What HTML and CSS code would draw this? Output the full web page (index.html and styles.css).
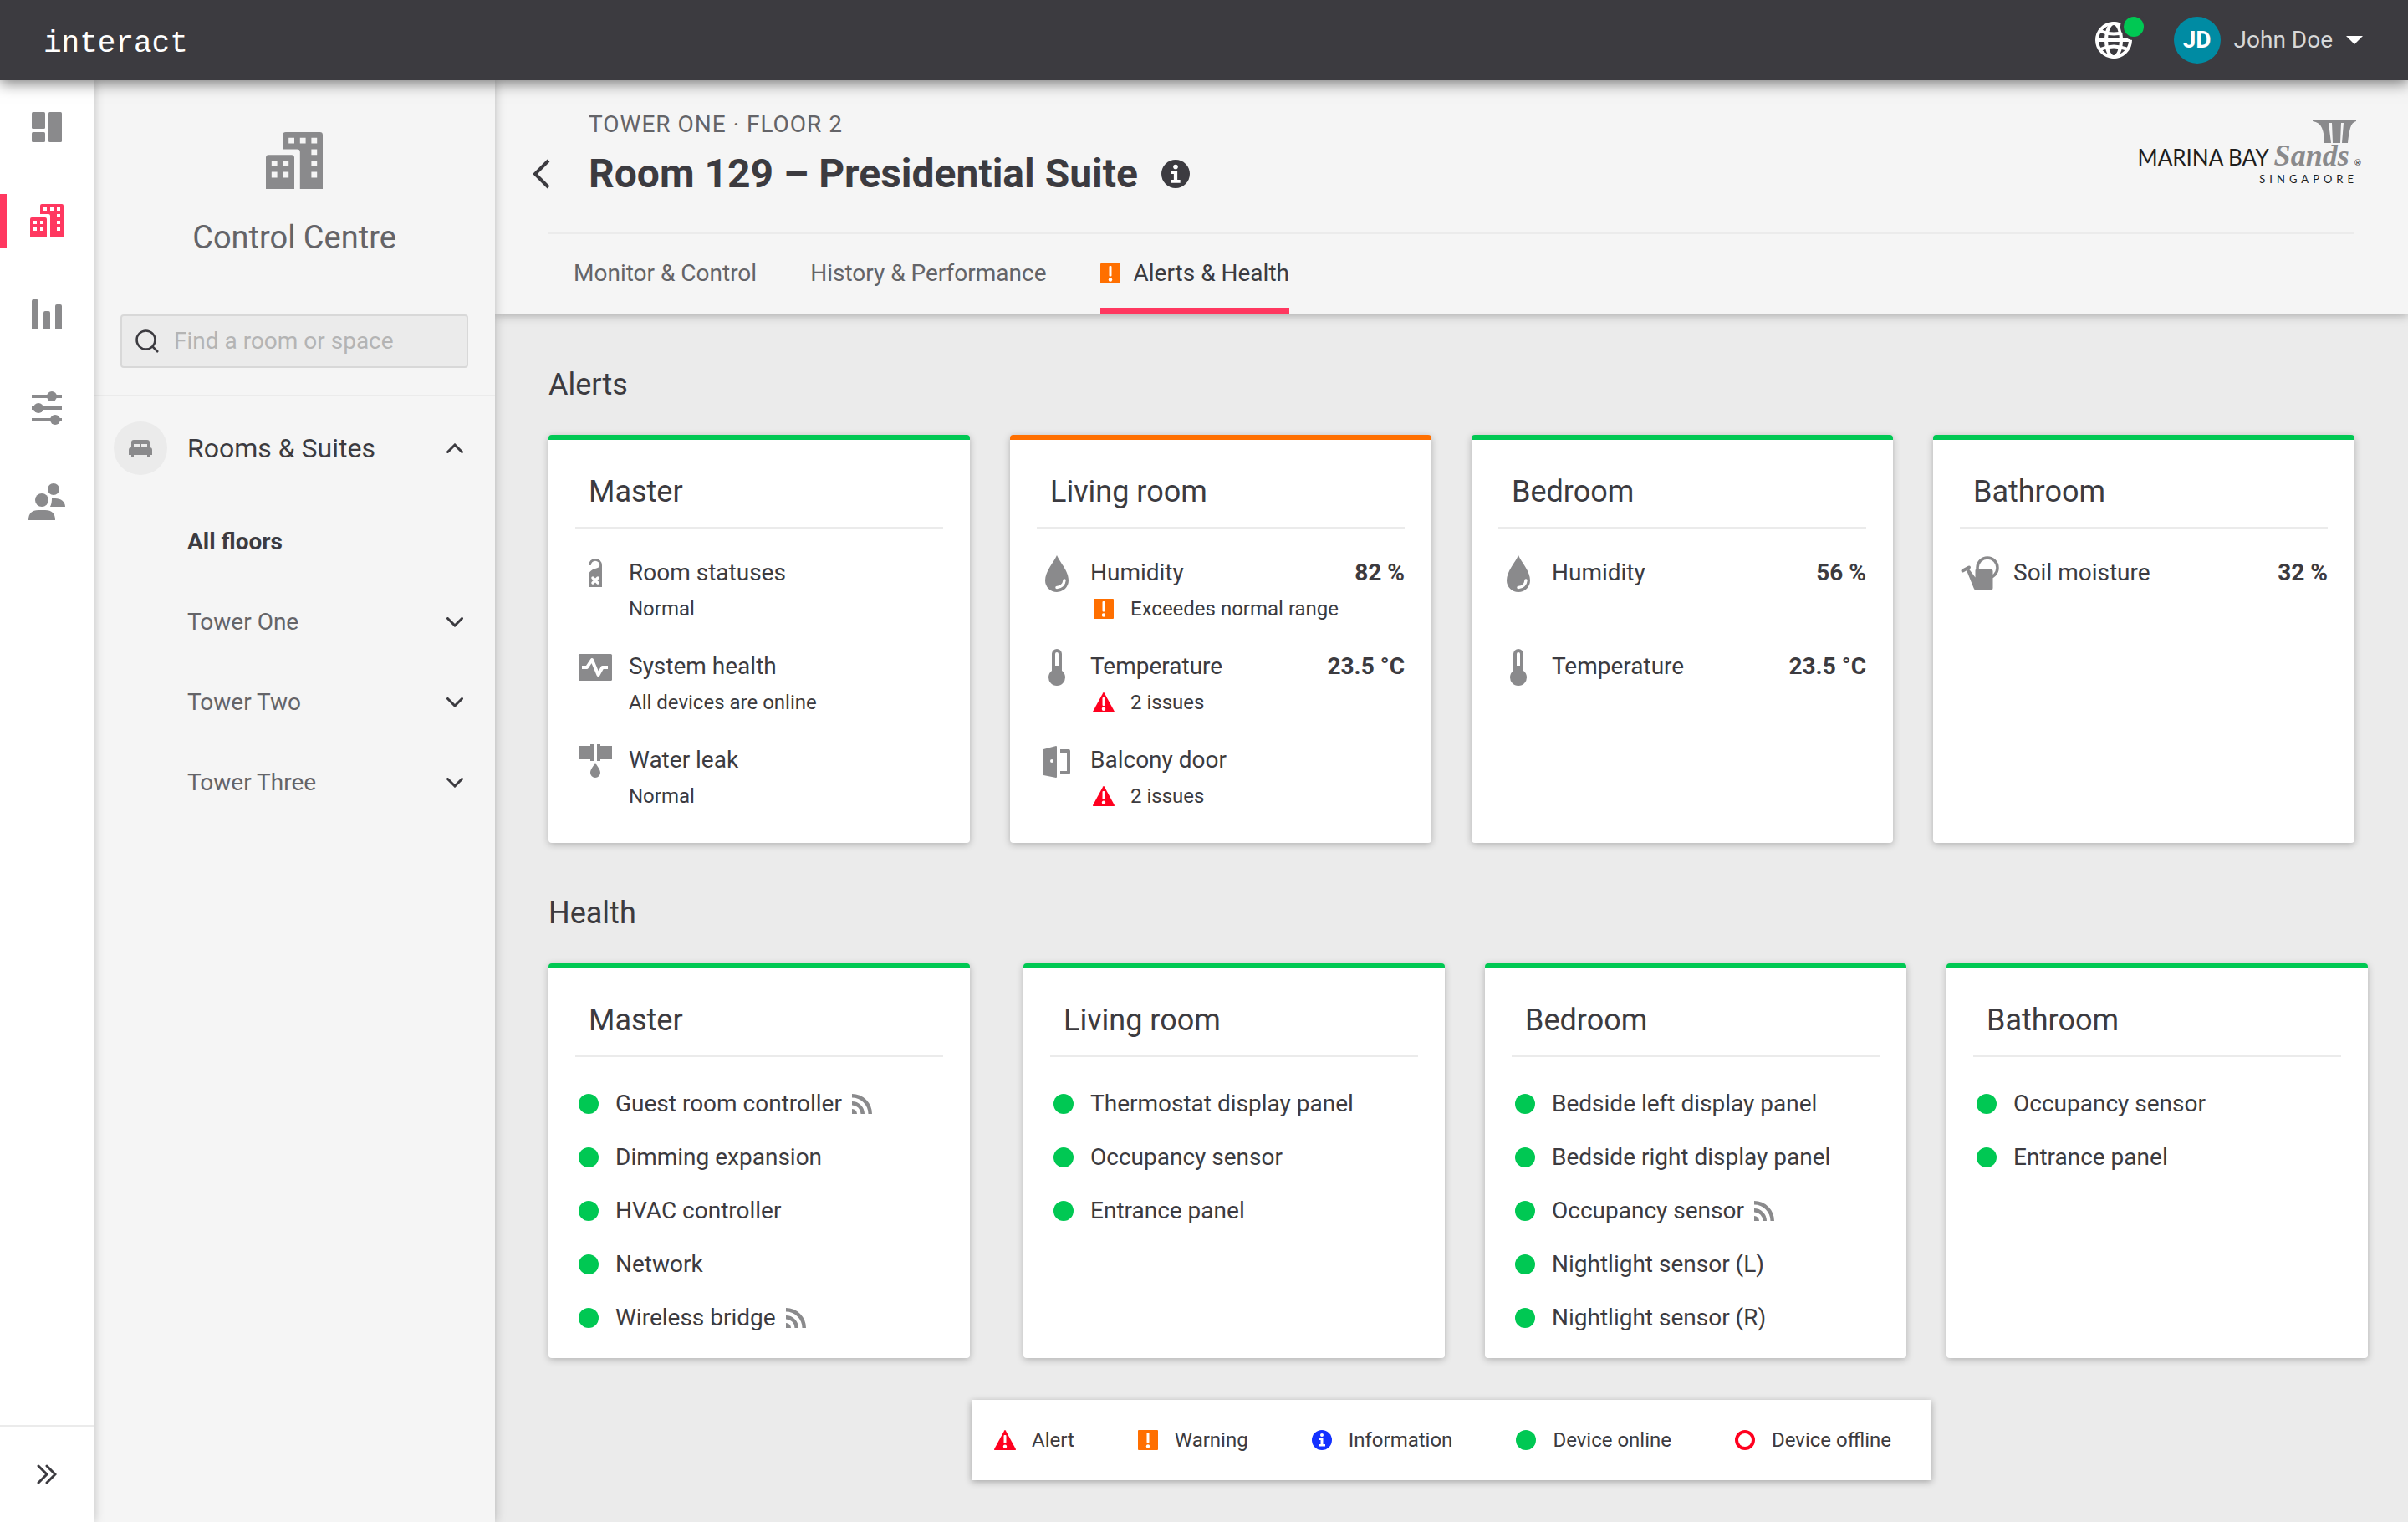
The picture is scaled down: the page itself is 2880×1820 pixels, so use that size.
FILE: index.html
```html
<!DOCTYPE html>
<html lang="en">
<head>
  <meta charset="UTF-8">
  <meta name="viewport" content="width=device-width, initial-scale=1.0">
  <title>Interact - Room 129</title>
  <link rel="stylesheet" href="styles.css">
</head>

<body>

  <!-- Icon set -->
  <svg class="icon-set" aria-hidden="true">
    <symbol id="dashboard" viewBox="0 0 48 48">
      <rect x="6" y="6" width="16" height="20" rx="1.5" />
      <rect x="6" y="30" width="16" height="12" rx="1.5" />
      <rect x="26" y="6" width="16" height="36" rx="1.5" />
    </symbol>
    <symbol id="building" viewBox="0 0 40 40">
      <path fill-rule="evenodd" d="M14 0h24a2 2 0 0 1 2 2v38H24V14a2 2 0 0 0-2-2H12V2a2 2 0 0 1 2-2zM16 4v4h4V4zM24 4v4h4V4zM32 4v4h4V4zM32 12v4h4v-4zM32 20v4h4v-4zM32 28v4h4v-4zM2 16h16a2 2 0 0 1 2 2v22H0V18a2 2 0 0 1 2-2zM4 20v4h4v-4zM12 20v4h4v-4zM4 28v4h4v-4zM12 28v4h4v-4z" />
    </symbol>
    <symbol id="bars" viewBox="0 0 48 48">
      <path d="M6 42V8a2 2 0 0 1 2-2h4a2 2 0 0 1 2 2v34zM20 42V22a2 2 0 0 1 2-2h4a2 2 0 0 1 2 2v20zM34 42V14a2 2 0 0 1 2-2h4a2 2 0 0 1 2 2v28z" />
    </symbol>
    <symbol id="sliders" viewBox="0 0 48 48">
      <path d="M6 8h36v4H6zM6 22h36v4H6zM6 36h36v4H6z" />
      <circle cx="30" cy="10" r="6" />
      <circle cx="14" cy="24" r="6" />
      <circle cx="34" cy="38" r="6" />
    </symbol>
    <symbol id="users" viewBox="0 0 48 48">
      <circle cx="18" cy="22" r="8" />
      <circle cx="32" cy="9" r="7" />
      <path d="M2 46c0-8 4-12 12-12h8c8 0 12 4 12 12zM30 20h4c7 0 12 4 12 10H28c1.500-3 2-6 2-10z" />
    </symbol>
    <symbol id="bed" viewBox="0 0 28 20">
      <path d="M3 8V3q0-3 3-3h16q3 0 3 3v5h-3V5h-7v3h-2V5H6v3zM0 18v-6q0-3 3-3h22q3 0 3 3v6h-3v2h-3v-2H6v2H3v-2z" />
    </symbol>
    <symbol id="chevron" viewBox="0 0 20 12">
      <path d="M1.500 1.500L10 10l8.500-8.500" fill="none" stroke="currentColor" stroke-width="3" stroke-linecap="round" />
    </symbol>
    <symbol id="warning" viewBox="0 0 32 32">
      <rect x="4" y="4" width="24" height="24" rx="1" fill="#ff6f00" />
      <rect x="14.500" y="7" width="3" height="12.500" rx="1" fill="#fff" />
      <circle cx="16" cy="23.500" r="2.200" fill="#fff" />
    </symbol>
    <symbol id="alert" viewBox="0 0 32 32">
      <path d="M15.300 4.500q.7-1 1.400 0L29 27q.3 1-.8 1H3.800q-1.100 0-.8-1z" fill="#ff001f" />
      <rect x="14.500" y="10" width="3" height="10" rx="1" fill="#fff" />
      <circle cx="16" cy="23.800" r="2.200" fill="#fff" />
    </symbol>
    <symbol id="info" viewBox="0 0 24 24">
      <circle cx="12" cy="12" r="12" />
      <path d="M8 9.500h5.500V17H16v2.500H8V17h2.500v-5H8z" fill="#fff" />
      <circle cx="12" cy="6" r="2" fill="#fff" />
    </symbol>
    <symbol id="rss" viewBox="0 0 24 24">
      <path d="M0 18a6 6 0 0 1 6 6H0zM0 9a15 15 0 0 1 15 15h-4.500A10.500 10.500 0 0 0 0 13.500zM0 0a24 24 0 0 1 24 24h-4.500A19.500 19.500 0 0 0 0 4.500z" />
    </symbol>
    <symbol id="hanger" viewBox="0 0 48 44">
      <path d="M16 12a8 8 0 0 1 16 0v26H16V25c0-5 3-7.500 8-9 3.500-1 5.200-1.800 5.200-4a5.200 5.200 0 0 0-10.400 0z" />
      <path d="M21 27l6 6M27 27l-6 6" stroke="#fff" stroke-width="3.500" stroke-linecap="round" />
    </symbol>
    <symbol id="pulse" viewBox="0 0 48 44">
      <rect x="4" y="6" width="40" height="32" rx="1.500" />
      <path d="M8 22h6l6-9 7.500 18 5-9H39" fill="none" stroke="#fff" stroke-width="4" stroke-linejoin="round" />
    </symbol>
    <symbol id="leak" viewBox="0 0 48 44">
      <path d="M4 4h14V2h4v20h-4v-2H4zM44 4H30V2h-4v20h4v-2h14zM24 24c2 4 6 8 6 12a6 6 0 0 1-12 0c0-4 4-8 6-12z" />
    </symbol>
    <symbol id="drop" viewBox="0 0 48 44">
      <path d="M24 0c4 9 14 19 14 30a14 14 0 0 1-28 0C10 19 20 9 24 0z" />
      <path d="M33 30a9 9 0 0 1-9 8.500" fill="none" stroke="#fff" stroke-width="3.500" stroke-linecap="round" />
    </symbol>
    <symbol id="thermometer" viewBox="0 0 48 44">
      <path fill-rule="evenodd" d="M18 6a6 6 0 0 1 12 0v20a10 10 0 1 1-12 0zM22 6v14h4V6a2 2 0 0 0-4 0z" />
    </symbol>
    <symbol id="door" viewBox="0 0 48 44">
      <path fill-rule="evenodd" d="M8 8l15-4q1 0 1 1v36q0 1-1 1L8 39zM18 20a2 2 0 1 0 0 4 2 2 0 0 0 0-4z" />
      <path d="M28 10h10v26H28" fill="none" stroke="currentColor" stroke-width="4" stroke-linejoin="round" />
    </symbol>
    <symbol id="can" viewBox="0 0 48 44">
      <circle cx="33" cy="15" r="12" fill="none" stroke="currentColor" stroke-width="3.500" />
      <path d="M21 16h15q3.500 0 3.500 3.500V39q0 3-3 3H20q-2.500 0-3.500-3L8 18l3-1.500 7.500 10V18.500q0-2.500 2.500-2.500z" />
      <path d="M3.500 18.500l7.500-4" stroke="currentColor" stroke-width="4" stroke-linecap="round" />
    </symbol>
  </svg>

  <header class="topbar">
    <a href="#" class="brand">interact</a>
    <button type="button" class="language" aria-label="Language">
      <svg viewBox="0 0 44 44" fill="none" stroke="#fff" stroke-width="4">
        <circle cx="22" cy="22" r="20" />
        <ellipse cx="22" cy="22" rx="9" ry="20" />
        <path d="M2 22h40M6 11q16 7 32 0M6 33q16-7 32 0" />
      </svg>
      <span class="language-dot"></span>
    </button>
    <button type="button" class="user">
      <span class="avatar">JD</span>
      John Doe
      <svg width="20" height="10" viewBox="0 0 20 10"><path d="M0 0h20L10 10z" fill="#fff" /></svg>
    </button>
  </header>

  <div class="layout">
    <nav class="rail">
      <a href="#" class="rail-link" aria-label="Dashboard"><svg><use href="#dashboard" /></svg></a>
      <a href="#" class="rail-link active" aria-label="Control Centre"><svg class="rail-building"><use href="#building" /></svg></a>
      <a href="#" class="rail-link" aria-label="Reports"><svg><use href="#bars" /></svg></a>
      <a href="#" class="rail-link" aria-label="Settings"><svg><use href="#sliders" /></svg></a>
      <a href="#" class="rail-link" aria-label="Users"><svg><use href="#users" /></svg></a>
      <button type="button" class="rail-expand" aria-label="Expand menu">
        <svg width="24" height="24" viewBox="0 0 24 24" fill="none" stroke="currentColor" stroke-width="3" stroke-linecap="round">
          <path d="M2 2l10 10L2 22M12 2l10 10-10 10" />
        </svg>
      </button>
    </nav>

    <aside class="sidebar">
      <div class="sidebar-head">
        <svg class="sidebar-logo"><use href="#building" /></svg>
        <h2>Control Centre</h2>
        <label class="search">
          <svg width="28" height="28" viewBox="0 0 28 28" fill="none" stroke="currentColor" stroke-width="2.500">
            <circle cx="12.500" cy="12.500" r="11" />
            <path d="M20 20l7 7" />
          </svg>
          <input type="text" placeholder="Find a room or space" aria-label="Find a room or space">
        </label>
      </div>
      <button type="button" class="group">
        <span class="group-icon"><svg width="28" height="20"><use href="#bed" /></svg></span>
        <span class="grow">Rooms &amp; Suites</span>
        <svg class="chevron up"><use href="#chevron" /></svg>
      </button>
      <ul class="floors">
        <li><a href="#" class="current">All floors</a></li>
        <li><button type="button">Tower One <svg class="chevron"><use href="#chevron" /></svg></button></li>
        <li><button type="button">Tower Two <svg class="chevron"><use href="#chevron" /></svg></button></li>
        <li><button type="button">Tower Three <svg class="chevron"><use href="#chevron" /></svg></button></li>
      </ul>
    </aside>

    <main>
      <div class="page-header">
        <div class="page-title">
          <a href="#" class="back" aria-label="Back">
            <svg width="24" height="36" viewBox="0 0 24 36" fill="none" stroke="currentColor" stroke-width="4">
              <path d="M20 2L4 18l16 16" />
            </svg>
          </a>
          <div class="grow">
            <p class="breadcrumb">TOWER ONE · FLOOR 2</p>
            <h1>Room 129 – Presidential Suite <svg width="34" height="34"><use href="#info" /></svg></h1>
          </div>
          <div class="hotel">
            <svg class="hotel-towers" width="52" height="28" viewBox="0 0 52 28">
              <path d="M0 0h52v1q-5 1-7 8t-3 18h-7l2-24h-3l-1 24h-9L23 3h-4l3 24h-8q0-11-3-18T0 1z" />
            </svg>
            <p class="hotel-name">MARINA BAY <em>Sands</em><small>®</small></p>
            <p class="hotel-city">SINGAPORE</p>
          </div>
        </div>
        <nav class="tabs">
          <a href="#">Monitor &amp; Control</a>
          <a href="#">History &amp; Performance</a>
          <a href="#" class="active"><svg viewBox="4 4 24 24"><use href="#warning" width="32" height="32" /></svg>Alerts &amp; Health</a>
        </nav>
      </div>

      <div class="content">
        <section>
          <h2>Alerts</h2>
          <div class="cards">
            <article class="card">
              <h3>Master</h3>
              <ul class="readings">
                <li>
                  <svg class="reading-icon"><use href="#hanger" /></svg>
                  <div class="grow">
                    <p>Room statuses</p>
                    <p class="status">Normal</p>
                  </div>
                </li>
                <li>
                  <svg class="reading-icon"><use href="#pulse" /></svg>
                  <div class="grow">
                    <p>System health</p>
                    <p class="status">All devices are online</p>
                  </div>
                </li>
                <li>
                  <svg class="reading-icon"><use href="#leak" /></svg>
                  <div class="grow">
                    <p>Water leak</p>
                    <p class="status">Normal</p>
                  </div>
                </li>
              </ul>
            </article>

            <article class="card card-warning">
              <h3>Living room</h3>
              <ul class="readings">
                <li>
                  <svg class="reading-icon"><use href="#drop" /></svg>
                  <div class="grow">
                    <p>Humidity <strong>82 %</strong></p>
                    <p class="status"><svg class="badge"><use href="#warning" /></svg>Exceedes normal range</p>
                  </div>
                </li>
                <li>
                  <svg class="reading-icon"><use href="#thermometer" /></svg>
                  <div class="grow">
                    <p>Temperature <strong>23.5 °C</strong></p>
                    <p class="status"><svg class="badge"><use href="#alert" /></svg>2 issues</p>
                  </div>
                </li>
                <li>
                  <svg class="reading-icon"><use href="#door" /></svg>
                  <div class="grow">
                    <p>Balcony door</p>
                    <p class="status"><svg class="badge"><use href="#alert" /></svg>2 issues</p>
                  </div>
                </li>
              </ul>
            </article>

            <article class="card">
              <h3>Bedroom</h3>
              <ul class="readings">
                <li>
                  <svg class="reading-icon"><use href="#drop" /></svg>
                  <p class="grow">Humidity <strong>56 %</strong></p>
                </li>
                <li>
                  <svg class="reading-icon"><use href="#thermometer" /></svg>
                  <p class="grow">Temperature <strong>23.5 °C</strong></p>
                </li>
              </ul>
            </article>

            <article class="card">
              <h3>Bathroom</h3>
              <ul class="readings">
                <li>
                  <svg class="reading-icon"><use href="#can" /></svg>
                  <p class="grow">Soil moisture <strong>32 %</strong></p>
                </li>
              </ul>
            </article>
          </div>
        </section>

        <section>
          <h2>Health</h2>
          <div class="cards cards-health">
            <article class="card">
              <h3>Master</h3>
              <ul class="devices">
                <li>Guest room controller <svg><use href="#rss" /></svg></li>
                <li>Dimming expansion</li>
                <li>HVAC controller</li>
                <li>Network</li>
                <li>Wireless bridge <svg><use href="#rss" /></svg></li>
              </ul>
            </article>

            <article class="card">
              <h3>Living room</h3>
              <ul class="devices">
                <li>Thermostat display panel</li>
                <li>Occupancy sensor</li>
                <li>Entrance panel</li>
              </ul>
            </article>

            <article class="card">
              <h3>Bedroom</h3>
              <ul class="devices">
                <li>Bedside left display panel</li>
                <li>Bedside right display panel</li>
                <li>Occupancy sensor <svg><use href="#rss" /></svg></li>
                <li>Nightlight sensor (L)</li>
                <li>Nightlight sensor (R)</li>
              </ul>
            </article>

            <article class="card">
              <h3>Bathroom</h3>
              <ul class="devices">
                <li>Occupancy sensor</li>
                <li>Entrance panel</li>
              </ul>
            </article>
          </div>
        </section>

        <ul class="legend">
          <li><svg class="badge"><use href="#alert" /></svg>Alert</li>
          <li><svg class="badge"><use href="#warning" /></svg>Warning</li>
          <li><svg class="badge badge-info" viewBox="-4 -4 32 32"><use href="#info" width="24" height="24" /></svg>Information</li>
          <li><svg class="badge" viewBox="0 0 32 32"><circle cx="16" cy="16" r="12" fill="#00c853" /></svg>Device online</li>
          <li><svg class="badge" viewBox="0 0 32 32"><circle cx="16" cy="16" r="10" fill="none" stroke="#ff001f" stroke-width="4" /></svg>Device offline</li>
        </ul>
      </div>
    </main>
  </div>

</body>
</html>
```
FILE: styles.css
```css
* {
  box-sizing: border-box;
}

body {
  margin: 0;
  min-height: 100vh;
  display: flex;
  flex-direction: column;
  font-family: Roboto, sans-serif;
  font-size: 28px;
  line-height: 42px;
  color: #3c3b40;
  background-color: #ebebeb;
}

h1, h2, h3, p, ul {
  margin: 0;
  padding: 0;
}

h2, h3 {
  font-size: 36px;
  line-height: 44px;
  font-weight: 400;
}

ul {
  list-style: none;
}

a {
  color: inherit;
  text-decoration: none;
}

button {
  padding: 0;
  border: none;
  background: none;
  font: inherit;
  color: inherit;
  text-align: left;
  cursor: pointer;
}

svg {
  flex: none;
  fill: currentColor;
}

.icon-set {
  display: none;
}

.grow {
  flex: 1;
}

/* Top bar */
.topbar {
  position: relative;
  z-index: 3;
  display: flex;
  align-items: center;
  height: 96px;
  padding: 0 54px 0 52px;
  background-color: #3c3b40;
  box-shadow: 0 4px 16px rgba(0, 0, 0, 0.5);
}

.brand {
  flex: 1;
  padding-top: 10px;
  font-family: "Liberation Mono", monospace;
  font-size: 36px;
  color: #fff;
}

.language {
  position: relative;
  width: 44px;
  height: 44px;
  margin-right: 50px;
}

.language svg {
  display: block;
  fill: none;
}

.language-dot {
  position: absolute;
  top: -10px;
  right: -18px;
  width: 32px;
  height: 32px;
  border: 4px solid #3c3b40;
  border-radius: 50%;
  background-color: #00c853;
}

.user {
  display: flex;
  align-items: center;
  gap: 16px;
  color: #d8d8d8;
}

.avatar {
  width: 56px;
  line-height: 56px;
  border-radius: 50%;
  background-color: #008ba3;
  color: #fff;
  font-weight: 700;
  text-align: center;
}

.layout {
  flex: 1;
  display: flex;
}

/* Icon rail */
.rail {
  position: relative;
  z-index: 2;
  flex: none;
  display: flex;
  flex-direction: column;
  gap: 48px;
  width: 112px;
  padding-top: 24px;
  background-color: #fff;
  box-shadow: 0 0 12px rgba(0, 0, 0, 0.25);
}

.rail-link {
  display: flex;
  align-items: center;
  justify-content: center;
  height: 64px;
  border: solid transparent;
  border-width: 0 8px;
  color: #8a8a8c;
}

.rail-link svg {
  width: 48px;
  height: 48px;
}

.rail-link .rail-building {
  width: 40px;
  height: 40px;
}

.rail-link.active {
  border-left-color: #ff3860;
  color: #ff3860;
}

.rail-expand {
  display: flex;
  align-items: center;
  justify-content: center;
  height: 116px;
  margin-top: auto;
  border-top: 2px solid #ebebeb;
}

.rail-expand svg {
  fill: none;
}

/* Sidebar */
.sidebar {
  position: relative;
  z-index: 1;
  flex: none;
  width: 480px;
  background-color: #f5f5f5;
  box-shadow: 0 0 12px rgba(0, 0, 0, 0.25);
}

.sidebar-head {
  display: flex;
  flex-direction: column;
  align-items: center;
  padding: 62px 32px 32px;
  border-bottom: 2px solid #ebebeb;
}

.sidebar-logo {
  width: 68px;
  height: 68px;
  color: #8a8a8c;
}

.sidebar h2 {
  margin: 36px 0 70px;
  font-size: 38px;
  color: #646468;
}

.search {
  display: flex;
  align-items: center;
  gap: 18px;
  width: 100%;
  height: 64px;
  padding: 0 16px;
  border: 2px solid #d8d8d8;
  border-radius: 4px;
  background-color: #ebebeb;
}

.search svg {
  fill: none;
}

.search input {
  flex: 1;
  min-width: 0;
  padding: 0;
  border: none;
  outline: none;
  background: none;
  font: inherit;
  color: inherit;
}

.search input::placeholder {
  color: #b4b4b4;
}

.group {
  display: flex;
  align-items: center;
  gap: 24px;
  width: 100%;
  margin: 30px 0 32px;
  padding: 0 38px 0 24px;
  font-size: 32px;
}

.group-icon {
  display: flex;
  align-items: center;
  justify-content: center;
  width: 64px;
  height: 64px;
  border-radius: 50%;
  background-color: #ebebeb;
  color: #8a8a8c;
}

.chevron {
  width: 20px;
  height: 12px;
  color: #3c3b40;
}

.chevron.up {
  transform: rotate(180deg);
}

.floors a,
.floors button {
  display: flex;
  align-items: center;
  justify-content: space-between;
  width: 100%;
  height: 96px;
  padding: 0 38px 0 112px;
  color: #646468;
}

.floors .current {
  font-weight: 700;
  color: #3c3b40;
}

/* Page header */
main {
  flex: 1;
  min-width: 0;
}

.page-header {
  padding: 34px 64px 0;
  background-color: #f5f5f5;
  box-shadow: 0 0 12px rgba(0, 0, 0, 0.35);
}

.page-title {
  display: flex;
  gap: 44px;
  margin: 0 -8px 38px -20px;
}

.back {
  display: flex;
  align-items: center;
  align-self: flex-end;
  height: 64px;
}

.back svg {
  fill: none;
}

.breadcrumb {
  margin-bottom: 8px;
  line-height: 38px;
  letter-spacing: 1px;
  color: #646468;
}

h1 {
  display: flex;
  align-items: center;
  gap: 28px;
  font-size: 48px;
  line-height: 64px;
}

.hotel {
  display: flex;
  flex-direction: column;
  align-items: flex-end;
  padding-top: 14px;
  font-family: Lato, sans-serif;
  color: #1e1e1e;
}

.hotel-towers {
  margin-right: 6px;
  color: #8a8a8c;
}

.hotel-name {
  display: flex;
  align-items: baseline;
  gap: 6px;
  font-size: 26px;
  line-height: 28px;
}

.hotel-name em {
  font-family: "Liberation Serif", serif;
  font-size: 36px;
  font-weight: 700;
  color: #8a8a8c;
}

.hotel-name small {
  font-size: 10px;
}

.hotel-city {
  margin-right: 4px;
  font-size: 13px;
  line-height: 12px;
  letter-spacing: 5px;
}

.tabs {
  display: flex;
  gap: 64px;
  padding-left: 30px;
  border-top: 2px solid #ebebeb;
  color: #646468;
}

.tabs a {
  display: flex;
  align-items: center;
  gap: 16px;
  height: 96px;
  padding-top: 6px;
  border: solid transparent;
  border-width: 0 0 8px;
}

.tabs svg {
  width: 24px;
  height: 24px;
}

.tabs .active {
  border-bottom-color: #ff3860;
  color: #3c3b40;
}

/* Cards */
.content {
  padding: 62px 64px 50px;
}

.content h2 {
  margin-bottom: 38px;
}

.cards {
  display: flex;
  gap: 48px;
  margin-bottom: 62px;
}

.card {
  flex: 1;
  padding: 0 32px;
  border-top: 6px solid #00c853;
  border-radius: 4px;
  background-color: #fff;
  box-shadow: 0 2px 8px rgba(0, 0, 0, 0.25);
}

.card-warning {
  border-top-color: #ff6f00;
}

.card h3 {
  padding: 40px 16px 20px;
  border-bottom: 2px solid #ebebeb;
}

.cards-health {
  margin: 0 -16px 50px 0;
}

.cards-health .card:first-child {
  margin-right: 16px;
}

.readings {
  display: flex;
  flex-direction: column;
  gap: 32px;
  padding: 32px 0 40px;
}

.readings li {
  display: flex;
  gap: 16px;
  min-height: 80px;
}

.readings p {
  display: flex;
  justify-content: space-between;
}

.reading-icon {
  width: 48px;
  height: 44px;
  color: #8a8a8c;
}

.readings .status {
  justify-content: flex-start;
  align-items: center;
  gap: 16px;
  margin-top: 6px;
  font-size: 24px;
  line-height: 32px;
}

.badge {
  width: 32px;
  height: 32px;
}

.badge-info {
  color: #1431ff;
}

.devices {
  padding: 24px 4px 16px;
}

.devices li {
  display: flex;
  align-items: center;
  gap: 12px;
  line-height: 64px;
}

.devices li::before {
  content: "";
  width: 24px;
  height: 24px;
  margin-right: 8px;
  border-radius: 50%;
  background-color: #00c853;
}

.devices svg {
  width: 24px;
  height: 24px;
  color: #8a8a8c;
}

/* Legend */
.legend {
  display: flex;
  align-items: center;
  gap: 72px;
  width: fit-content;
  height: 96px;
  margin: 0 auto;
  padding: 0 48px 0 24px;
  background-color: #fff;
  box-shadow: 0 2px 8px rgba(0, 0, 0, 0.3);
  font-size: 24px;
}

.legend li {
  display: flex;
  align-items: center;
  gap: 16px;
}
```
